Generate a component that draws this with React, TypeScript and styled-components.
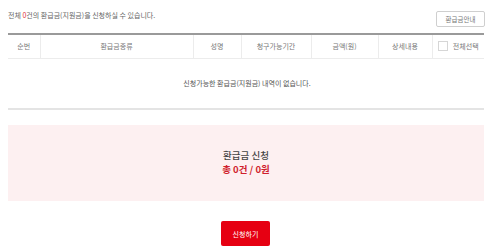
import React from "react";
import styled, { createGlobalStyle } from "styled-components";

const Global = createGlobalStyle`
  html, body { margin: 0; padding: 0; background: #fff; }
  body { font-family: "Noto Sans CJK KR", "Noto Sans", sans-serif; color: #555; }
  * { box-sizing: border-box; }
`;

const Page = styled.div`
  width: 476px;
  margin-left: 8px;
  display: flex;
  flex-direction: column;
`;

const TopBar = styled.div`
  display: flex;
  justify-content: space-between;
  align-items: flex-start;
  padding-top: 10px;
  height: 33px;
`;

const Notice = styled.p`
  margin: 0;
  font-size: 7px;
  line-height: 10px;
  color: #666;
`;

const Red = styled.span`
  color: #e0303a;
`;

const GuideButton = styled.button`
  margin-top: 1px;
  margin-right: -1px;
  width: 49px;
  height: 16px;
  padding: 0;
  border: 1px solid #cfcfcf;
  border-radius: 2px;
  background: #fff;
  font-family: inherit;
  font-size: 6.5px;
  color: #777;
`;

const Table = styled.table`
  width: 100%;
  border-collapse: collapse;
  table-layout: fixed;
  border-top: 2px solid #9a9a9a;
  border-bottom: 2px solid #e4e4e4;
`;

const Th = styled.th`
  height: 24px;
  padding: 0;
  font-size: 7px;
  font-weight: 400;
  color: #777;
  text-align: center;
  border-bottom: 1px solid #ececec;
  & + & { border-left: 1px solid #ececec; }
`;

const CheckLabel = styled.label`
  display: flex;
  align-items: center;
  justify-content: center;
  gap: 5px;
`;

const Box = styled.span`
  width: 10px;
  height: 10px;
  border: 1px solid #d6d6d6;
  background: #fff;
  display: inline-block;
`;

const EmptyCell = styled.td`
  height: 51px;
  padding: 0 0 0 2px;
  text-align: center;
  font-size: 7px;
  color: #555;
`;

const Summary = styled.div`
  margin-top: 15px;
  height: 76px;
  background: #fdf0f1;
  display: flex;
  flex-direction: column;
  align-items: center;
  justify-content: center;
  padding-bottom: 3px;
`;

const SummaryTitle = styled.div`
  font-size: 9.5px;
  line-height: 14px;
  font-weight: 500;
  color: #444;
`;

const SummaryTotal = styled.div`
  font-size: 9.5px;
  line-height: 14px;
  font-weight: 700;
  color: #d01f2e;
`;

const Actions = styled.div`
  display: flex;
  justify-content: center;
  margin-top: 20px;
  padding-right: 1px;
`;

const ApplyButton = styled.button`
  width: 49px;
  height: 25px;
  padding: 0;
  border: none;
  border-radius: 2px;
  background: #e60012;
  color: #fff;
  font-family: inherit;
  font-size: 7px;
`;

const columns = [32, 153, 48, 70, 67, 54, 52];

export default function App() {
  return (
    <>
      <Global />
      <Page>
        <TopBar>
          <Notice>
            전체 <Red>0</Red>건의 환급금(지원금)을 신청하실 수 있습니다.
          </Notice>
          <GuideButton>환급금안내</GuideButton>
        </TopBar>
        <Table>
          <colgroup>
            {columns.map((w, i) => (
              <col key={i} style={{ width: w }} />
            ))}
          </colgroup>
          <thead>
            <tr>
              <Th>순번</Th>
              <Th>환급금종류</Th>
              <Th>성명</Th>
              <Th>청구가능기간</Th>
              <Th>금액(원)</Th>
              <Th>상세내용</Th>
              <Th>
                <CheckLabel>
                  <Box />
                  전체선택
                </CheckLabel>
              </Th>
            </tr>
          </thead>
          <tbody>
            <tr>
              <EmptyCell colSpan={7}>신청가능한 환급금(지원금) 내역이 없습니다.</EmptyCell>
            </tr>
          </tbody>
        </Table>
        <Summary>
          <SummaryTitle>환급금 신청</SummaryTitle>
          <SummaryTotal>총 0건 / 0원</SummaryTotal>
        </Summary>
        <Actions>
          <ApplyButton>신청하기</ApplyButton>
        </Actions>
      </Page>
    </>
  );
}
